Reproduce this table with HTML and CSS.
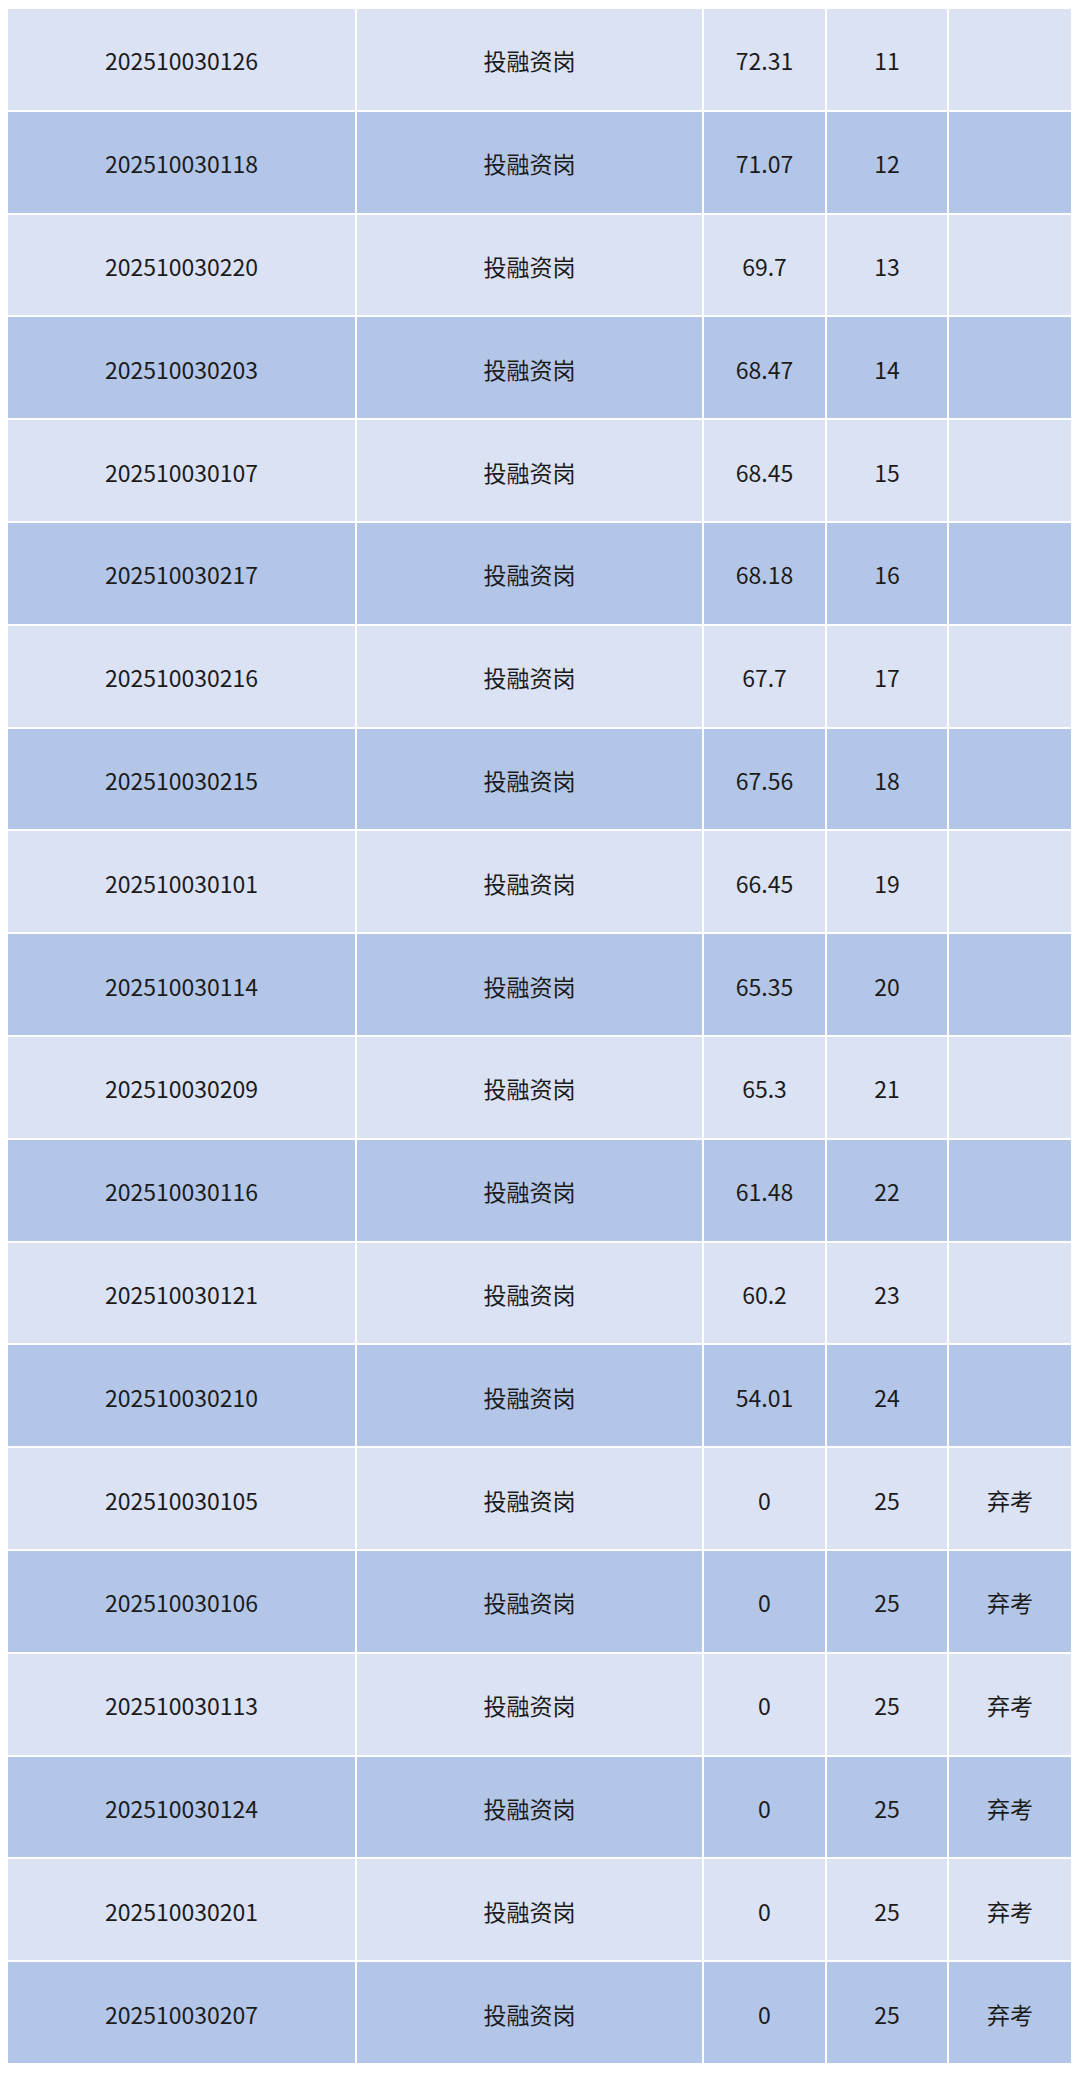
FILE: index.html
```html
<!DOCTYPE html>
<html lang="zh-CN">
<head>
<meta charset="utf-8">
<title>成绩表</title>
<link rel="stylesheet" href="styles.css">
</head>
<body>
<table class="score-table">
<colgroup>
<col class="c-id"><col class="c-post"><col class="c-score"><col class="c-rank"><col class="c-note">
</colgroup>
<tbody>
<tr class="light"><td>202510030126</td><td>投融资岗</td><td>72.31</td><td>11</td><td></td></tr>
<tr class="dark"><td>202510030118</td><td>投融资岗</td><td>71.07</td><td>12</td><td></td></tr>
<tr class="light"><td>202510030220</td><td>投融资岗</td><td>69.7</td><td>13</td><td></td></tr>
<tr class="dark"><td>202510030203</td><td>投融资岗</td><td>68.47</td><td>14</td><td></td></tr>
<tr class="light"><td>202510030107</td><td>投融资岗</td><td>68.45</td><td>15</td><td></td></tr>
<tr class="dark"><td>202510030217</td><td>投融资岗</td><td>68.18</td><td>16</td><td></td></tr>
<tr class="light"><td>202510030216</td><td>投融资岗</td><td>67.7</td><td>17</td><td></td></tr>
<tr class="dark"><td>202510030215</td><td>投融资岗</td><td>67.56</td><td>18</td><td></td></tr>
<tr class="light"><td>202510030101</td><td>投融资岗</td><td>66.45</td><td>19</td><td></td></tr>
<tr class="dark"><td>202510030114</td><td>投融资岗</td><td>65.35</td><td>20</td><td></td></tr>
<tr class="light"><td>202510030209</td><td>投融资岗</td><td>65.3</td><td>21</td><td></td></tr>
<tr class="dark"><td>202510030116</td><td>投融资岗</td><td>61.48</td><td>22</td><td></td></tr>
<tr class="light"><td>202510030121</td><td>投融资岗</td><td>60.2</td><td>23</td><td></td></tr>
<tr class="dark"><td>202510030210</td><td>投融资岗</td><td>54.01</td><td>24</td><td></td></tr>
<tr class="light"><td>202510030105</td><td>投融资岗</td><td>0</td><td>25</td><td>弃考</td></tr>
<tr class="dark"><td>202510030106</td><td>投融资岗</td><td>0</td><td>25</td><td>弃考</td></tr>
<tr class="light"><td>202510030113</td><td>投融资岗</td><td>0</td><td>25</td><td>弃考</td></tr>
<tr class="dark"><td>202510030124</td><td>投融资岗</td><td>0</td><td>25</td><td>弃考</td></tr>
<tr class="light"><td>202510030201</td><td>投融资岗</td><td>0</td><td>25</td><td>弃考</td></tr>
<tr class="dark"><td>202510030207</td><td>投融资岗</td><td>0</td><td>25</td><td>弃考</td></tr>
</tbody>
</table>
</body>
</html>
```

FILE: styles.css
```css
html, body {
  background: #ffffff;
}
body {
  margin: 7px 6px;
  font-family: "Noto Sans CJK SC", "Noto Sans", sans-serif;
  color: #1b1b1b;
}
.score-table {
  table-layout: fixed;
  width: 1067px;
  border-collapse: separate;
  border-spacing: 2px;
}
.c-id { width: 347px; }
.c-post { width: 345px; }
.c-score { width: 121px; }
.c-rank { width: 120px; }
.c-note { width: 122px; }
.score-table td {
  box-sizing: border-box;
  height: 100.8px;
  padding: 3px 0 0;
  text-align: center;
  vertical-align: middle;
  font-size: 23px;
  line-height: 1;
}
.light td { background: #dbe2f3; }
.dark td { background: #b4c6e7; }
```
